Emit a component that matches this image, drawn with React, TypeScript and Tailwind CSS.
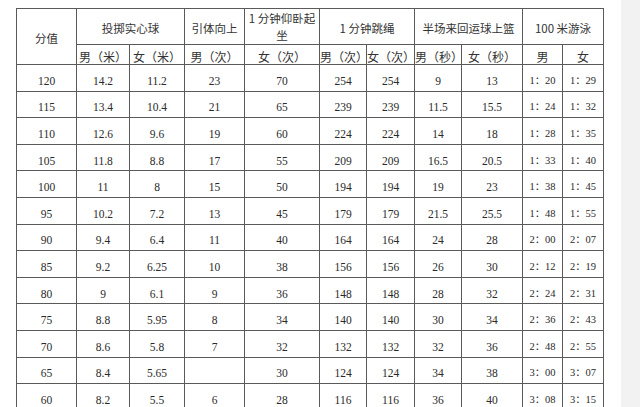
import React from 'react';

type Row = [string, string, string, string, string, string, string, string, string, string, string];

const rows: Row[] = [
  ['120', '14.2', '11.2', '23', '70', '254', '254', '9', '13', '1：20', '1：29'],
  ['115', '13.4', '10.4', '21', '65', '239', '239', '11.5', '15.5', '1：24', '1：32'],
  ['110', '12.6', '9.6', '19', '60', '224', '224', '14', '18', '1：28', '1：35'],
  ['105', '11.8', '8.8', '17', '55', '209', '209', '16.5', '20.5', '1：33', '1：40'],
  ['100', '11', '8', '15', '50', '194', '194', '19', '23', '1：38', '1：45'],
  ['95', '10.2', '7.2', '13', '45', '179', '179', '21.5', '25.5', '1：48', '1：55'],
  ['90', '9.4', '6.4', '11', '40', '164', '164', '24', '28', '2：00', '2：07'],
  ['85', '9.2', '6.25', '10', '38', '156', '156', '26', '30', '2：12', '2：19'],
  ['80', '9', '6.1', '9', '36', '148', '148', '28', '32', '2：24', '2：31'],
  ['75', '8.8', '5.95', '8', '34', '140', '140', '30', '34', '2：36', '2：43'],
  ['70', '8.6', '5.8', '7', '32', '132', '132', '32', '36', '2：48', '2：55'],
  ['65', '8.4', '5.65', '', '30', '124', '124', '34', '38', '3：00', '3：07'],
  ['60', '8.2', '5.5', '6', '28', '116', '116', '36', '40', '3：08', '3：15'],
];

const widths = [60, 53, 55, 60, 75, 47, 48, 47, 61, 40, 41];

const cell = 'border border-[#5a5a5a] text-center p-0';
const head = `${cell} font-['Noto_Sans_CJK_SC',sans-serif] text-[#333]`;
const num = `${cell} font-['Liberation_Serif','Noto_Sans_CJK_SC',serif] text-[#2a2a2a]`;

const subHeads = ['男（米）', '女（米）', '男（次）', '女（次）', '男（次）', '女（次）', '男（秒）', '女（秒）', '男', '女'];

const App: React.FC = () => {
  return (
    <div className="w-[640px] h-[407px] overflow-hidden bg-white flex">
      <div className="w-[621px] shrink-0 pt-[8px] pl-[16px]">
        <table className="border-collapse table-fixed w-[588px]">
          <colgroup>
            {widths.map((w, i) => (
              <col key={i} style={{ width: w }} />
            ))}
          </colgroup>
          <thead>
            <tr className="h-[35px]">
              <th rowSpan={2} className={`${head} font-normal text-[11.5px] pt-[4px]`}>分值</th>
              <th colSpan={2} className={`${head} font-normal text-[11.5px] pt-[5px]`}>投掷实心球</th>
              <th className={`${head} font-normal text-[11.5px] pt-[5px]`}>引体向上</th>
              <th className={`${head} font-normal text-[11.5px] leading-[17px] pt-[1px]`}>
                1 分钟仰卧起
                <br />坐
              </th>
              <th colSpan={2} className={`${head} font-normal text-[11.5px] pt-[5px]`}>1 分钟跳绳</th>
              <th colSpan={2} className={`${head} font-normal text-[11.5px] pt-[5px]`}>半场来回运球上篮</th>
              <th colSpan={2} className={`${head} font-normal text-[11.5px] pt-[5px]`}>100 米游泳</th>
            </tr>
            <tr className="h-[20px]">
              {subHeads.map((s, i) => (
                <th key={i} className={`${head} font-normal text-[12px] leading-[12px] align-bottom pb-[1px] whitespace-nowrap`}>
                  {s}
                </th>
              ))}
            </tr>
          </thead>
          <tbody>
            {rows.map((r) => (
              <tr key={r[0]} className="h-[26.6px]">
                {r.map((v, i) => (
                  <td
                    key={i}
                    className={`${num} ${i >= 9 ? 'text-[10.5px]' : 'text-[11.5px]'} leading-[14px] pt-[6px] whitespace-nowrap`}
                  >
                    {v}
                  </td>
                ))}
              </tr>
            ))}
          </tbody>
        </table>
      </div>
      <div className="flex-1 bg-[#f2f2f2]" />
    </div>
  );
};

export default App;
